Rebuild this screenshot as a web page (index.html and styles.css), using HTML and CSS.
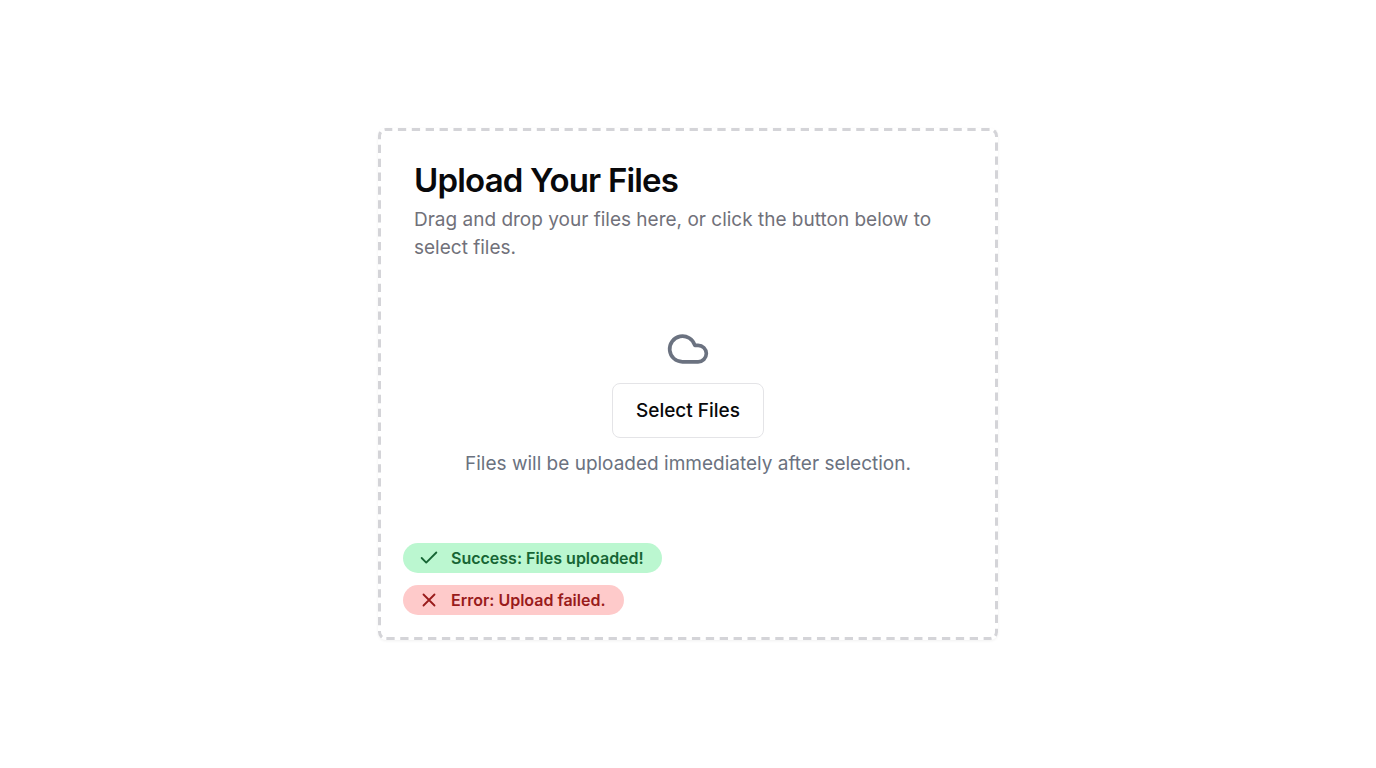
FILE: index.html
```html
<!DOCTYPE html>
<html lang="en">
<head>
<meta charset="utf-8">
<meta name="viewport" content="width=device-width, initial-scale=1">
<title>Upload Your Files</title>
<link rel="stylesheet" href="styles.css">
</head>
<body class="page">
<main class="card">
  <svg class="outline" aria-hidden="true"><rect width="100%" height="100%" rx="8" pathLength="2250"/></svg>
  <header class="card-header">
    <h1 class="title">Upload Your Files</h1>
    <p class="description">Drag and drop your files here, or click the button below to select files.</p>
  </header>
  <section class="upload">
    <svg class="cloud" viewBox="0 0 24 24" aria-hidden="true"><path d="M17.5 19H9a7 7 0 1 1 6.71-9h1.79a4.5 4.5 0 1 1 0 9Z"/></svg>
    <button class="select-button" type="button">Select Files</button>
    <p class="hint">Files will be uploaded immediately after selection.</p>
  </section>
  <footer class="statuses">
    <div class="badge badge-success">
      <svg class="badge-icon" viewBox="0 0 24 24" aria-hidden="true"><path d="M20 6 9 17l-5-5"/></svg>
      <span>Success: Files uploaded!</span>
    </div>
    <div class="badge badge-error">
      <svg class="badge-icon" viewBox="0 0 24 24" aria-hidden="true"><path d="M18 6 6 18M6 6l12 12"/></svg>
      <span>Error: Upload failed.</span>
    </div>
  </footer>
</main>
</body>
</html>
```
FILE: styles.css
```css
* {
  box-sizing: border-box;
}

.page {
  margin: 0;
  min-height: 100vh;
  display: flex;
  align-items: center;
  justify-content: center;
  background: #fff;
  color: #09090b;
  font-family: Inter, sans-serif;
}

.card {
  position: relative;
  width: 100%;
  max-width: 620px;
  padding: 3px;
  border-radius: 8px;
  box-shadow: 0 1px 3px rgba(0, 0, 0, 0.06);
}

/* Half of the stroke is clipped by the svg box, leaving a 3px dashed edge. */
.outline {
  position: absolute;
  inset: 0;
  width: 100%;
  height: 100%;
  border-radius: 8px;
  overflow: hidden;
  pointer-events: none;
  fill: none;
  stroke: #d4d4d8;
  stroke-width: 6;
  stroke-dasharray: 8.3 5.59;
  stroke-dashoffset: 2;
}

.card-header {
  padding: 33px 33px 0;
}

.title {
  margin: 0 0 9px;
  font-size: 33px;
  line-height: 33px;
  font-weight: 600;
  letter-spacing: -0.025em;
}

.description,
.hint {
  margin: 0;
  font-size: 19px;
  line-height: 28px;
  color: #71717a;
}

.upload {
  display: flex;
  flex-direction: column;
  align-items: center;
  gap: 12px;
  padding: 65px 33px;
}

.hint {
  color: #6b7280;
}

.cloud {
  width: 44px;
  height: 44px;
  fill: none;
  stroke: #6b7280;
  stroke-width: 2;
  stroke-linecap: round;
  stroke-linejoin: round;
}

.select-button {
  height: 55px;
  padding: 0 23px;
  border: 1px solid #e4e4e7;
  border-radius: 8px;
  background: #fff;
  color: #09090b;
  font: 500 19px/28px Inter, sans-serif;
}

.statuses {
  display: flex;
  flex-direction: column;
  align-items: flex-start;
  gap: 12px;
  padding: 0 22px 22px;
}

.badge {
  display: flex;
  align-items: center;
  gap: 11px;
  padding: 3px 18px 3px 15px;
  border-radius: 15px;
  font-size: 16px;
  line-height: 24px;
  font-weight: 600;
}

.badge-success {
  background: #bbf7d0;
  color: #166534;
}

.badge-error {
  background: #fecaca;
  color: #991b1b;
}

.badge-icon {
  width: 22px;
  height: 22px;
  fill: none;
  stroke: currentColor;
  stroke-width: 2;
  stroke-linecap: round;
  stroke-linejoin: round;
}
```
